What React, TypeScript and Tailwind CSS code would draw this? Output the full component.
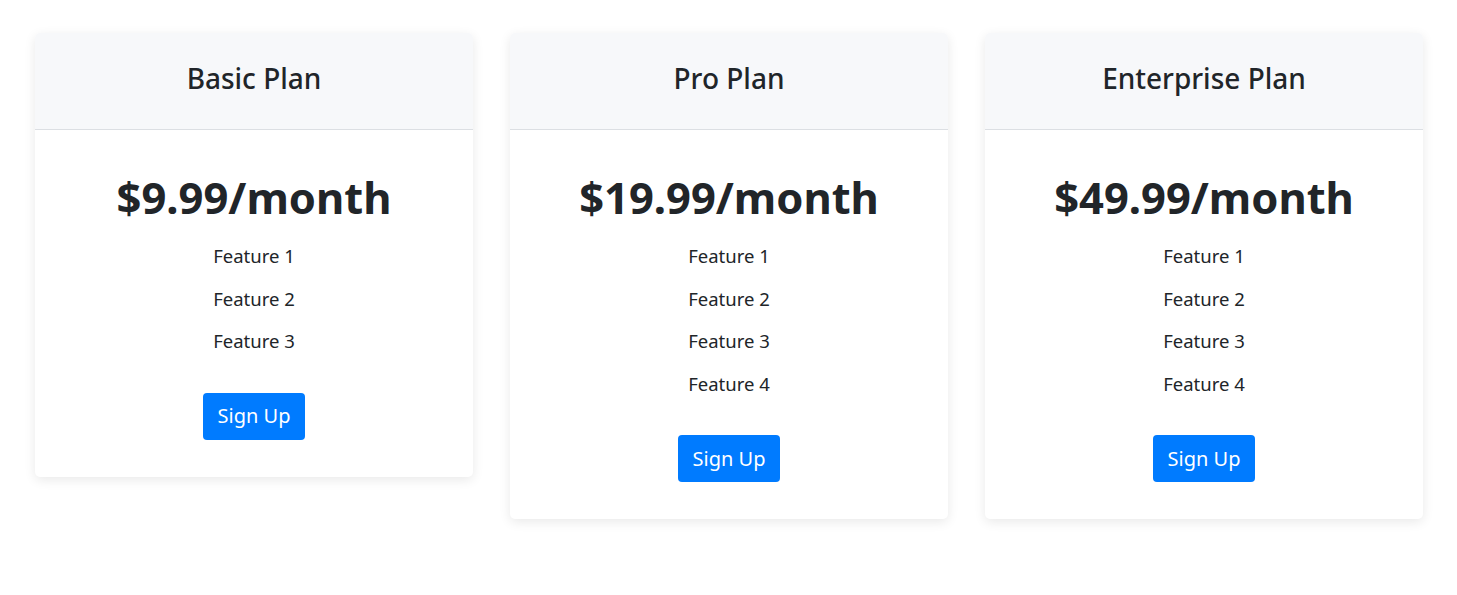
import React from 'react';

type Plan = {
  name: string;
  price: string;
  features: string[];
};

const plans: Plan[] = [
  { name: 'Basic Plan', price: '$9.99/month', features: ['Feature 1', 'Feature 2', 'Feature 3'] },
  { name: 'Pro Plan', price: '$19.99/month', features: ['Feature 1', 'Feature 2', 'Feature 3', 'Feature 4'] },
  { name: 'Enterprise Plan', price: '$49.99/month', features: ['Feature 1', 'Feature 2', 'Feature 3', 'Feature 4'] },
];

const PlanCard = ({ plan }: { plan: Plan }) => (
  <div className="flex-1 bg-white rounded-[5px] overflow-hidden shadow-[0_3px_12px_rgba(0,0,0,0.09)]">
    {/* header */}
    <div className="h-[97px] pb-[4px] flex items-center justify-center bg-[#f7f8fa] border-b border-[#dcdfe3]">
      <h3 className="text-[28px] font-medium leading-[1.2] text-[#212529]">{plan.name}</h3>
    </div>
    {/* body */}
    <div className="flex flex-col items-center pt-[43px] pb-[37px]">
      <h1 className="text-[43.5px] font-bold leading-[48px] text-[#212529]">{plan.price}</h1>
      <ul className="mt-[14px] flex flex-col items-center">
        {plan.features.map((f) => (
          <li key={f} className="h-[42.5px] flex items-center text-[18.5px] text-[#212529]">
            {f}
          </li>
        ))}
      </ul>
      <button className="mt-[30px] px-[15px] h-[47px] rounded-[4px] bg-[#007bff] text-white text-[20px] leading-[30px]">
        Sign Up
      </button>
    </div>
  </div>
);

export default function App() {
  return (
    <div
      className="min-h-screen bg-white pl-[35px] pr-[34px] pt-[33px]"
      style={{ fontFamily: '"Noto Sans", "Open Sans", sans-serif' }}
    >
      <div className="flex items-start gap-[37px]">
        {plans.map((p) => (
          <PlanCard key={p.name} plan={p} />
        ))}
      </div>
    </div>
  );
}
